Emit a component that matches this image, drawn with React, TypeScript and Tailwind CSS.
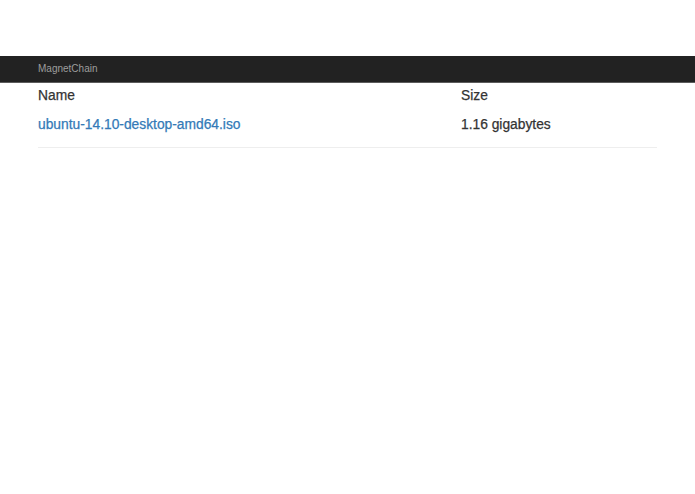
export default function App() {
  return (
    <div className="min-h-[494px] bg-white pt-[56px] font-['Liberation_Sans',Arial,sans-serif] text-[#333]">
      <nav className="h-[27px] border-b border-[#5c5c5c] bg-[#222] px-[38px]">
        <span className="block pt-[7px] text-[10px] leading-[12px] text-[#9d9d9d]">MagnetChain</span>
      </nav>
      <div className="mx-[38px] w-[619px] [-webkit-text-stroke:0.25px]">
        <div className="flex h-[26px] items-center text-[13.8px] leading-[16px]">
          <div className="w-[423px]">Name</div>
          <div>Size</div>
        </div>
        <div className="flex border-b border-[#eee] pt-[8px] pb-[14px] text-[13.8px] leading-[16px]">
          <div className="w-[423px]">
            <a href="#" className="text-[#337ab7]">ubuntu-14.10-desktop-amd64.iso</a>
          </div>
          <div>1.16 gigabytes</div>
        </div>
      </div>
    </div>
  );
}
